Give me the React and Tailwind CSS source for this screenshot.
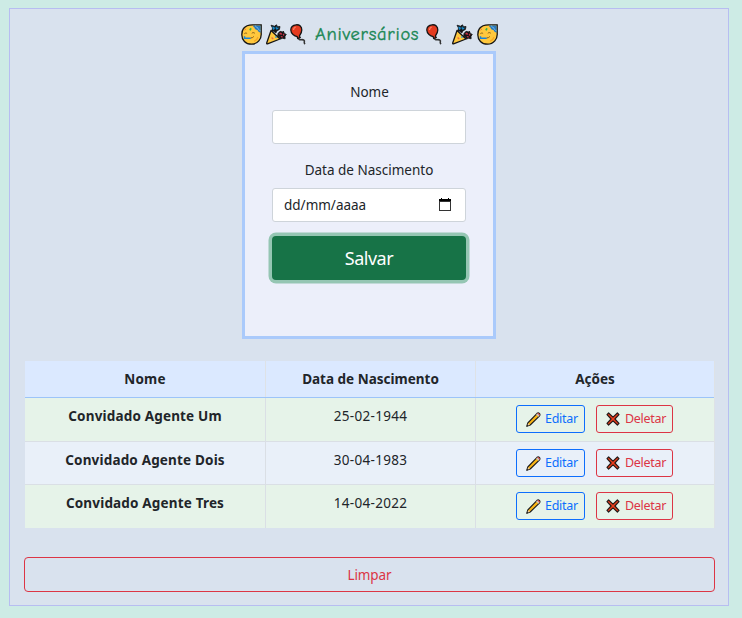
import React from "react";

function PartyFace({ className = "" }) {
  return (
    <svg width="21" height="21" viewBox="0 0 21 21" className={"shrink-0 " + className}>
      <path d="M2.500 4.500C4.500 1.800 7.500.8 11.500.8H20.200v8.200c.6 6-3.700 11.200-9.700 11.200S.8 16 .8 10.800C.8 8 1.300 6 2.500 4.500Z" fill="#ffc83d" stroke="#151515" strokeWidth="1.300" />
      <path d="M12 1.400h7.600v7.400c-1.600-.4-2.600-1.300-3.100-2.700-1.900-.2-2.800-1-3-2.500-.8-.5-1.400-1.200-1.500-2.200Z" fill="#2878bd" />
      <path d="M14.500 1.600c.3 1.400 1 2 2.400 2.200.1 1.500 1 2.400 2.500 2.800" stroke="#74bdf0" strokeWidth=".9" fill="none" />
      <path d="M10.800 9.300c.8-.9 2.200-.9 3 0M3.300 9.800c.7-.9 1.900-1 2.800-.3" stroke="#7a5314" strokeWidth=".9" fill="none" />
      <path d="m8.200 5.200 1.600-1.500.9 1.300-1.500 1.900Z" fill="#35b44a" />
      <path d="m3.500 6 1.500-1" stroke="#f2703a" strokeWidth="1" />
      <path d="M3.500 12.300v2h6.200" stroke="#1683dc" strokeWidth="1.500" fill="none" />
      <path d="M9.700 14c1.400-.1 2.400-.6 3.100-1.500" stroke="#8a5b12" strokeWidth="1" fill="none" />
      <path d="M13 17.300c2-.8 3.500-2.300 4-4.300" stroke="#f6a623" strokeWidth="1.200" fill="none" />
    </svg>
  );
}

function Popper({ className = "" }) {
  return (
    <svg width="21" height="21" viewBox="0 0 21 21" className={"shrink-0 " + className}>
      <path d="M5 6.500 14 15 1.500 19.800c-.6.200-1-.2-.8-.8Z" fill="#ffc83d" stroke="#151515" strokeWidth="1.300" strokeLinejoin="round" />
      <path d="m5.600 13.500 1.600 1.500" stroke="#ef6a3a" strokeWidth="1.400" />
      <path d="m9.300 12.500 1.200 1.200" stroke="#2ba0e0" strokeWidth="1.400" />
      <path d="m5 1.200 3.500 1L10.500.8l1 2 2.500-.3-.6 3-2.400 1.300L9.800 9 7.600 7.300 5.800 7 6.500 4Z" fill="#151515" stroke="#151515" strokeWidth=".8" strokeLinejoin="round" />
      <path d="m6.200 2.400 2.200.7.5 2-1.800 1Zm4-.3.700 1.600 1.800-.2-.5 1.600-1.800.6-1-1.800Z" fill="#1689c9" />
      <path d="m12 9.500 2-2.200 2.500.7.900-.9.900 2.300 2 1-1.300 1.800.1 2.600-2.500-.5-2.200.7-1-2-1.700-.8Z" fill="#151515" stroke="#151515" strokeWidth=".8" strokeLinejoin="round" />
      <path d="m13 10.100 1.400-1.700 1.500.8-.2 1.700Zm3.600.1 1-.6.9 1.200-1 1.300Zm-2.100 2 1.500-.2 1.300 1.200-1.900.4Z" fill="#c32f45" />
    </svg>
  );
}

function Balloon({ className = "" }) {
  return (
    <svg width="16" height="21" viewBox="0 0 16 21" className={"shrink-0 " + className}>
      <path d="M8.500 14c.3 1.700 1.300 2 2.800 1.700 2.200-.2 3.600.8 3 2.200-.3.900 0 1.500.8 2.100" stroke="#333" strokeWidth="1.600" fill="none" />
      <path d="M6.200.8c3.400-.3 5.600 2 5.600 5.100 0 2.500-1.500 4.600-2.400 6.100l.8 1.700-2.500.7-.5-1.700C4.500 12 .8 9.500.8 6.100.8 3.200 3 1.100 6.200.8Z" fill="#e43b20" stroke="#151515" strokeWidth="1.300" />
      <path d="M3.500 6c0-1.500.8-2.500 2.200-3" stroke="#ff8163" strokeWidth="1.200" fill="none" />
    </svg>
  );
}

function Pencil() {
  return (
    <svg width="15" height="15" viewBox="0 0 15 15" className="shrink-0">
      <path d="M.8 14.200 1.800 11 11.100 1.300c1.600-1.200 3.600.8 2.500 2.500L4.200 13Z" fill="#fbb616" stroke="#1b1b1b" strokeWidth="1.100" strokeLinejoin="round" />
      <path d="m11.200 1.600 2.200 2.200c1.100-1.300-.8-3.300-2.200-2.200Z" fill="#e4435b" />
      <path d="m10.200 2.600 2.200 2.200 1-1-2.200-2.200Z" fill="#c6c9ce" />
      <path d="m2.200 11.200 1.600 1.600-2.400 1Z" fill="#f2cda2" />
      <path d="m1.200 12.800 1 1.100-1.700.6Z" fill="#1b1b1b" />
    </svg>
  );
}

function Cross() {
  return (
    <svg width="14" height="14" viewBox="0 0 14 14" className="shrink-0">
      <path d="M2.600 1 7 5.100 11.400 1 13 2.600 8.900 7l4.100 4.400-1.600 1.600L7 8.900 2.600 13 1 11.400 5.100 7 1 2.600Z" fill="#ee3c1a" stroke="#241c1a" strokeWidth="1.200" strokeLinejoin="round" />
    </svg>
  );
}

function Calendar() {
  return (
    <svg width="12" height="14" viewBox="0 0 12 14" shapeRendering="crispEdges">
      <path d="M2 0h1v1h6V0h1v1h2v3H0V1h2Z" fill="#000" />
      <path d="M.5 3.500h11v9H.5Z" fill="none" stroke="#333" />
    </svg>
  );
}

const rows = [
  { nome: "Convidado Agente Um", data: "25-02-1944", style: "h-[44px] border-b bg-[#e6f3e9]" },
  { nome: "Convidado Agente Dois", data: "30-04-1983", style: "h-[43px] border-b bg-[#e9f0f9]" },
  { nome: "Convidado Agente Tres", data: "14-04-2022", style: "h-[43px] bg-[#e6f3e9]" },
];

export default function App() {
  return (
    <div className="h-[618px] w-[742px] bg-[#cdebe5] pl-[9px] pt-2 font-['Noto_Sans',sans-serif] text-[13.5px] leading-5 text-[#212529]">
      <main className="flex h-[598px] w-[720px] flex-col border border-[#b7bdf1] bg-[#d9e2ee] px-[14px]">
        <h1 className="flex h-[42px] shrink-0 items-start justify-start pl-[217px] pt-[15px]">
          <PartyFace />
          <Popper className="ml-1" />
          <Balloon className="ml-[3px]" />
          <span className="ml-[9px] -mt-px w-[105px] whitespace-nowrap font-['Comic_Sans_MS','Comic_Neue','Open_Sans',cursive] text-[18.5px] leading-[23px] tracking-[0.75px] text-[#198754] [-webkit-text-stroke:0.35px_#198754]">Aniversários</span>
          <Balloon className="ml-[6px]" />
          <Popper className="ml-[10px]" />
          <PartyFace className="ml-1" />
        </h1>

        <form className="ml-[218px] flex h-[288px] w-[254px] shrink-0 flex-col border-[3px] border-[#aacafb] bg-[#eceffa] px-[27px] pt-[28px] text-center" onSubmit={(e) => e.preventDefault()}>
          <label className="h-7 pl-px">Nome</label>
          <input type="text" className="h-[34px] w-full rounded-[3px] border border-[#ced4da] bg-white px-3 outline-none" />
          <label className="mt-4 h-7">Data de Nascimento</label>
          <div className="flex h-[34px] items-center justify-between rounded-[3px] border border-[#ced4da] bg-white pl-[11px] pr-[14px]">
            <span>dd/mm/aaaa</span>
            <Calendar />
          </div>
          <button className="mt-[14px] h-[44px] rounded-[4px] bg-[#177347] text-[18px] tracking-[-0.5px] text-white ring-[3.5px] ring-[#95c6b3]">Salvar</button>
        </form>

        <section className="ml-px mt-[22px] w-[690px] shrink-0 border-r border-[#dee2e6]">
          <div className="grid h-[37px] grid-cols-[241px_210px_1fr] border-b border-[#9cc4f9] bg-[#dbe9ff] text-center font-bold leading-[36px]">
            <div className="border-r border-[#dee2e6] tracking-[0.2px]">Nome</div>
            <div className="border-r border-[#dee2e6]">Data de Nascimento</div>
            <div>Ações</div>
          </div>
          {rows.map((r) => (
            <div key={r.nome} className={"grid grid-cols-[241px_210px_1fr] border-[#dadfe5] text-center " + r.style}>
              <div className="border-r border-[#dadfe5] pt-[8px] font-bold tracking-[0.17px]">{r.nome}</div>
              <div className="border-r border-[#dadfe5] pt-[8px] tracking-[0.3px]">{r.data}</div>
              <div className="flex items-start gap-[11px] pl-[40px] pt-[7px]">
                <button className="flex h-7 w-[69px] items-center gap-[4px] rounded-[3px] border border-[#0d6efd] pl-[9px] text-[12.5px] tracking-[-0.3px] text-[#0d6efd]">
                  <Pencil />
                  <span>Editar</span>
                </button>
                <button className="flex h-7 w-[77px] items-center gap-[5px] rounded-[3px] border border-[#dc3545] pl-[9px] text-[12.5px] tracking-[-0.3px] text-[#dc3545]">
                  <Cross />
                  <span>Deletar</span>
                </button>
              </div>
            </div>
          ))}
        </section>

        <button className="mt-[29px] h-[35px] w-[691px] shrink-0 rounded-[4px] border border-[#dc3545] tracking-[-0.1px] text-[#dc3545]">Limpar</button>
      </main>
    </div>
  );
}
